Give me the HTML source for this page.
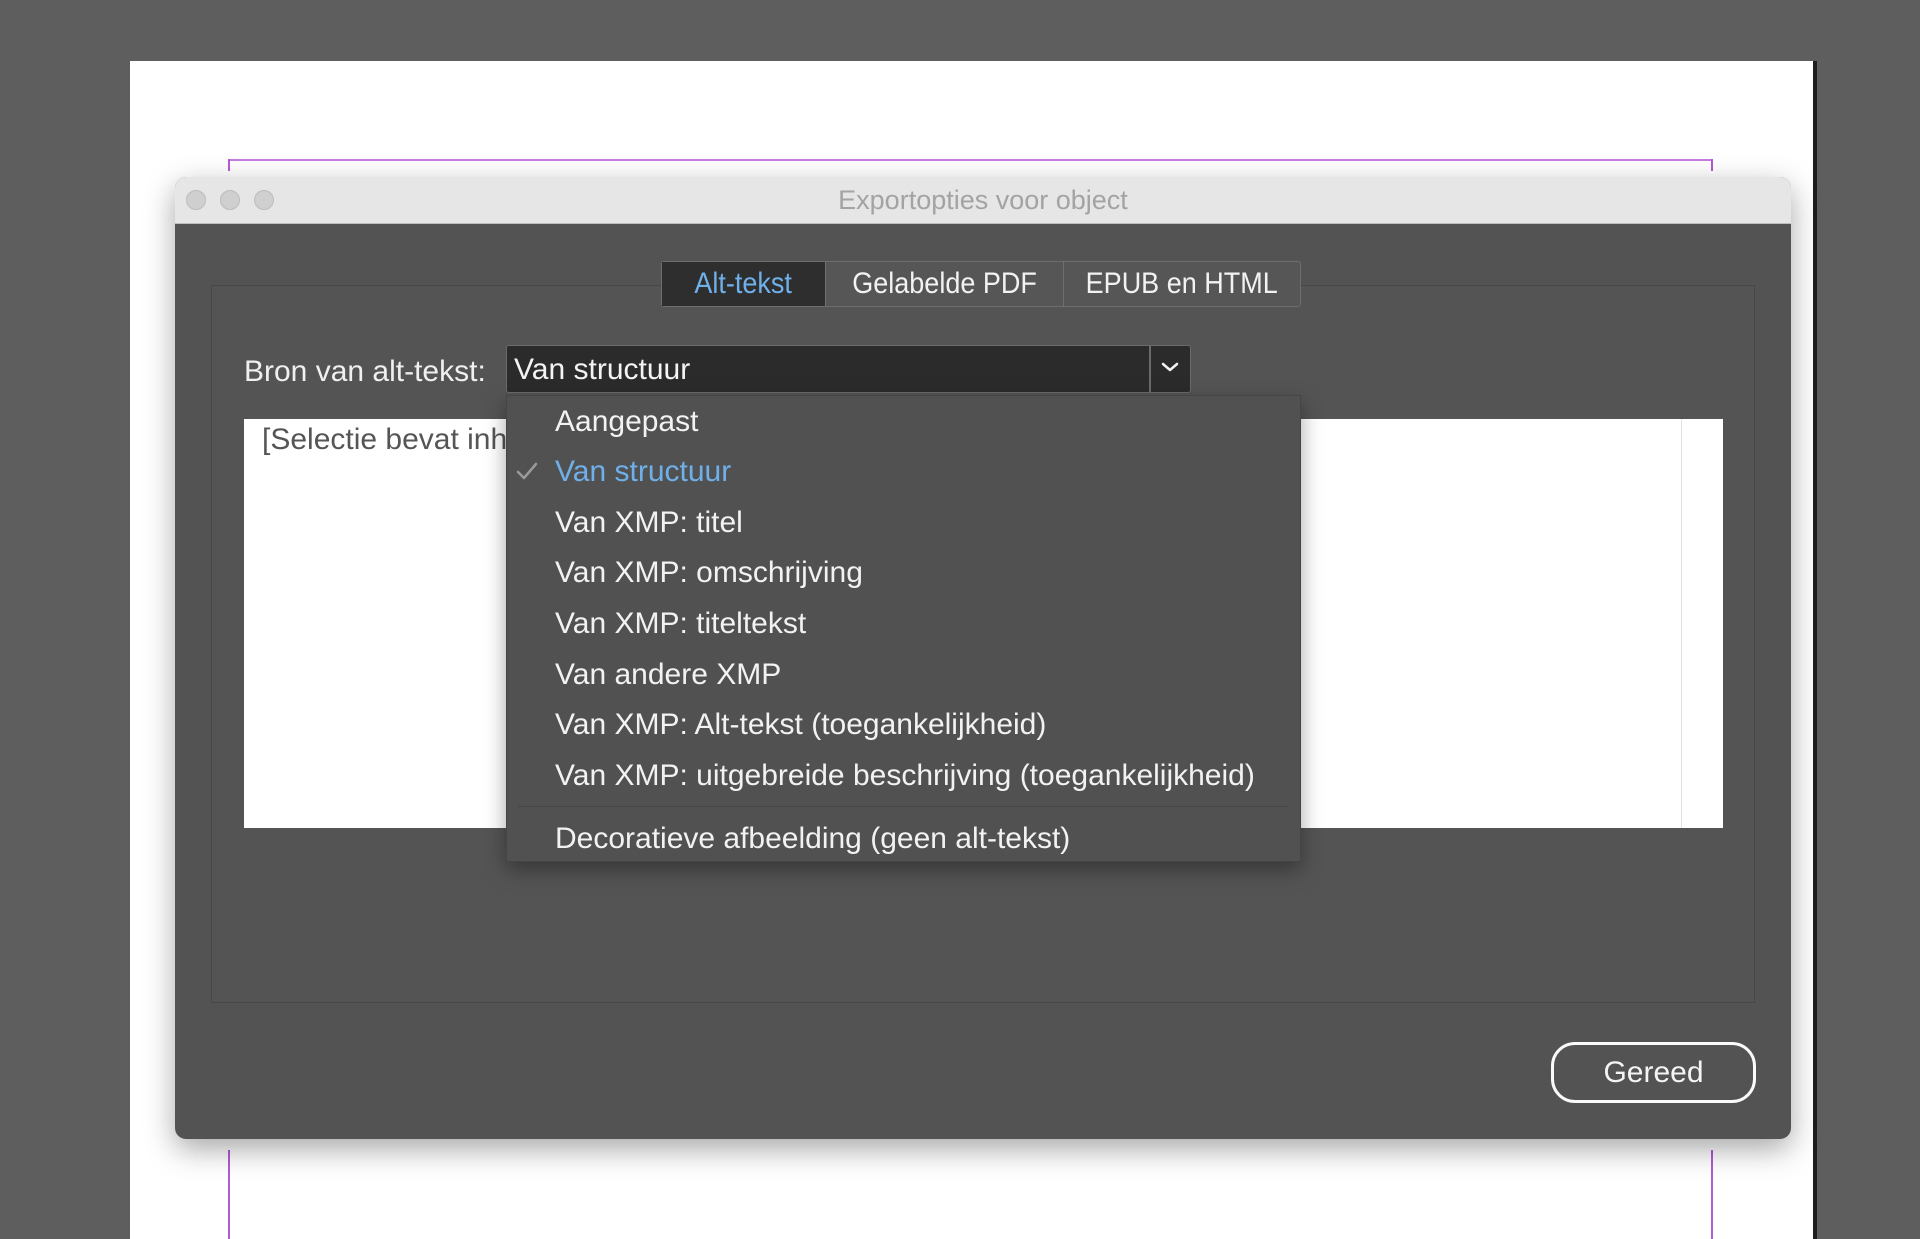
<!DOCTYPE html>
<html><head><meta charset="utf-8"><style>
*{margin:0;padding:0;box-sizing:border-box}
body{width:1920px;height:1239px;background:#5e5e5e;position:relative;overflow:hidden;font-family:"Liberation Sans",sans-serif}
.a{position:absolute}
.t{display:inline-block;white-space:nowrap}
.tc{display:inline-block;white-space:nowrap}
.tb{display:inline-block;transform:scaleX(0.9);transform-origin:center center;white-space:nowrap}
</style></head><body>
<div class="a" style="left:130px;top:61px;width:1683px;height:1178px;background:#fff"></div>
<div class="a" style="left:1813px;top:61px;width:4px;height:1178px;background:#1e1e1e"></div>
<div class="a" style="left:228px;top:159px;width:1485px;height:2px;background:#c77be0"></div>
<div class="a" style="left:228px;top:159px;width:2px;height:12px;background:#b45ad8"></div>
<div class="a" style="left:1711px;top:159px;width:2px;height:12px;background:#b45ad8"></div>
<div class="a" style="left:228px;top:1150px;width:2px;height:89px;background:#b45ad8"></div>
<div class="a" style="left:1711px;top:1150px;width:2px;height:89px;background:#b45ad8"></div>

<div class="a" style="left:175px;top:177px;width:1616px;height:962px;background:#535353;border-radius:11px;box-shadow:0 10px 30px rgba(0,0,0,0.35);overflow:hidden">
  <div class="a" style="left:0;top:0;width:1616px;height:47px;background:#e6e6e6;border-bottom:1px solid #bdbdbd"></div>
  <div class="a" style="left:11px;top:13px;width:20px;height:20px;border-radius:50%;background:#cfcfcf;border:1px solid #bcbcbc"></div>
  <div class="a" style="left:45px;top:13px;width:20px;height:20px;border-radius:50%;background:#cfcfcf;border:1px solid #bcbcbc"></div>
  <div class="a" style="left:79px;top:13px;width:20px;height:20px;border-radius:50%;background:#cfcfcf;border:1px solid #bcbcbc"></div>
  <div class="a" style="left:0;top:8px;width:1616px;text-align:center;font-size:27px;color:#a3a3a3;line-height:30px"><span class="tc">Exportopties voor object</span></div>
  <div class="a" style="left:36px;top:108px;width:1544px;height:718px;border:1px solid #474747;background:#545454"></div>
</div>

<div class="a" style="left:661px;top:261px;width:640px;height:46px;border:1px solid #6e6e6e;border-radius:3px;background:#565656"></div>
<div class="a" style="left:662px;top:262px;width:163px;height:44px;background:#2e2e2e"></div>
<div class="a" style="left:825px;top:262px;width:1px;height:44px;background:#6e6e6e"></div>
<div class="a" style="left:1063px;top:262px;width:1px;height:44px;background:#6e6e6e"></div>
<div class="a" style="left:662px;top:262px;width:163px;height:44px;line-height:44px;text-align:center;font-size:30px;color:#6fb0ea"><span class="tb">Alt-tekst</span></div>
<div class="a" style="left:826px;top:262px;width:237px;height:44px;line-height:44px;text-align:center;font-size:30px;color:#f2f2f2"><span class="tb">Gelabelde PDF</span></div>
<div class="a" style="left:1064px;top:262px;width:236px;height:44px;line-height:44px;text-align:center;font-size:30px;color:#f2f2f2"><span class="tb">EPUB en HTML</span></div>

<div class="a" style="left:244px;top:352px;height:40px;line-height:40px;font-size:30px;color:#f0f0f0"><span class="t">Bron van alt-tekst:</span></div>
<div class="a" style="left:506px;top:345px;width:685px;height:48px;background:#2b2b2b;border:1px solid #6a6a6a;border-radius:3px"></div>
<div class="a" style="left:1149px;top:346px;width:2px;height:46px;background:#6a6a6a"></div>
<div class="a" style="left:514px;top:349px;height:42px;line-height:42px;font-size:30px;color:#f4f4f4"><span class="t">Van structuur</span></div>
<svg class="a" style="left:1160px;top:360px" width="20" height="14" viewBox="0 0 20 14"><path d="M3 4 L10 10 L17 4" fill="none" stroke="#f2f2f2" stroke-width="2.5" stroke-linecap="round" stroke-linejoin="round"/></svg>

<div class="a" style="left:244px;top:419px;width:1479px;height:409px;background:#fff"></div>
<div class="a" style="left:1681px;top:419px;width:1px;height:409px;background:#e3e3e3"></div>
<div class="a" style="left:262px;top:420px;height:40px;line-height:40px;font-size:30px;color:#555"><span class="t">[Selectie bevat inhoud]</span></div>

<div class="a" style="left:506px;top:395px;width:795px;height:467px;background:#515151;border:1px solid #454545;box-shadow:0 8px 20px rgba(0,0,0,0.35)"></div>
<div class="a" style="left:518px;top:806px;width:771px;height:1px;background:#464646"></div>
<div class="a" style="left:555px;top:0;font-size:30px;color:#f2f2f2;line-height:40px">
  <div class="a" style="top:402px"><span class="t">Aangepast</span></div>
  <div class="a" style="top:452px;color:#6fb0ea"><span class="t">Van structuur</span></div>
  <div class="a" style="top:503px"><span class="t">Van XMP: titel</span></div>
  <div class="a" style="top:553px"><span class="t">Van XMP: omschrijving</span></div>
  <div class="a" style="top:604px"><span class="t">Van XMP: titeltekst</span></div>
  <div class="a" style="top:655px"><span class="t">Van andere XMP</span></div>
  <div class="a" style="top:705px"><span class="t">Van XMP: Alt-tekst (toegankelijkheid)</span></div>
  <div class="a" style="top:756px"><span class="t">Van XMP: uitgebreide beschrijving (toegankelijkheid)</span></div>
  <div class="a" style="top:819px"><span class="t">Decoratieve afbeelding (geen alt-tekst)</span></div>
</div>
<svg class="a" style="left:515px;top:461px" width="24" height="20" viewBox="0 0 24 20"><path d="M3 11 L9 17 L21 3" fill="none" stroke="#9a9a9a" stroke-width="2.5" stroke-linecap="round" stroke-linejoin="round"/></svg>

<div class="a" style="left:1551px;top:1042px;width:205px;height:61px;border:3px solid #fafafa;border-radius:24px;text-align:center;line-height:55px;font-size:30px;color:#f4f4f4"><span class="tc">Gereed</span></div>
</body></html>
